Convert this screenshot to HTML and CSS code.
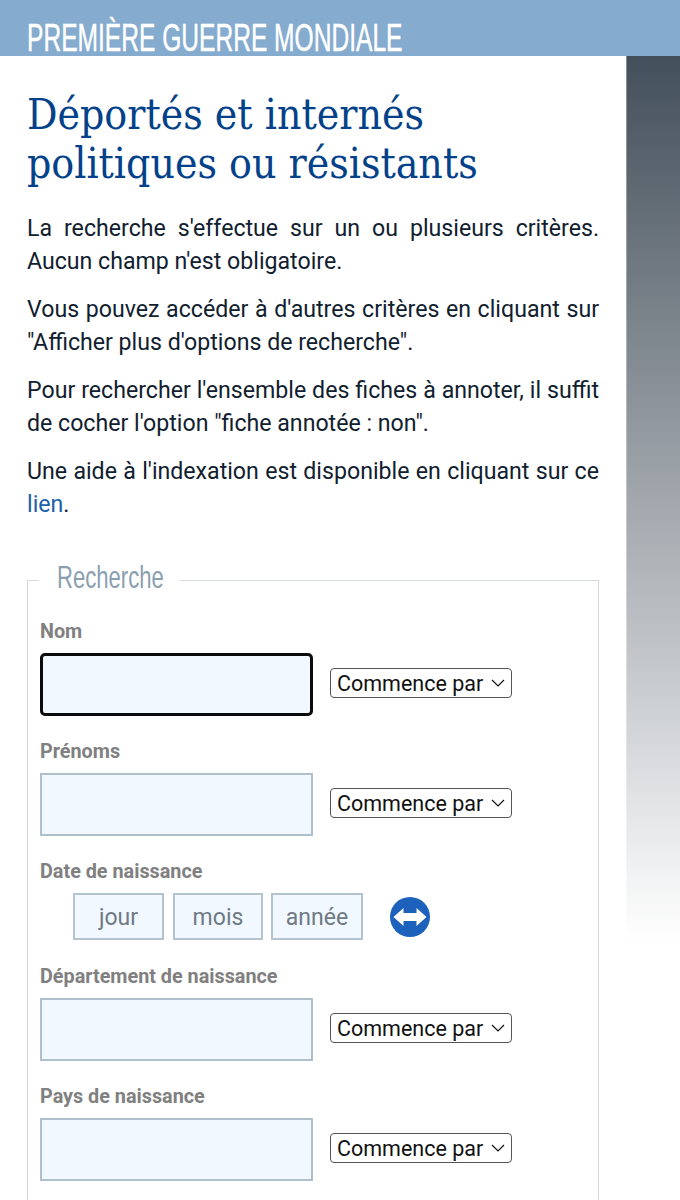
FILE: index.html
```html
<!DOCTYPE html>
<html lang="fr">
<head>
<meta charset="utf-8">
<title>Déportés et internés politiques ou résistants</title>
<link rel="stylesheet" href="styles.css">
</head>
<body>
<header class="top"><span class="top-title">PREMIÈRE GUERRE MONDIALE</span></header>
<div class="layout">
  <main class="main">
    <h1 class="title">Déportés et internés politiques ou résistants</h1>
    <p class="para">La recherche s'effectue sur un ou plusieurs critères. Aucun champ n'est obligatoire.</p>
    <p class="para">Vous pouvez accéder à d'autres critères en cliquant sur "Afficher plus d'options de recherche".</p>
    <p class="para">Pour rechercher l'ensemble des fiches à annoter, il suffit de cocher l'option "fiche annotée : non".</p>
    <p class="para">Une aide à l'indexation est disponible en cliquant sur ce <a class="link" href="#">lien</a>.</p>
    <fieldset class="box">
      <legend class="legend"><span class="legend-text">Recherche</span></legend>
      <div class="field">
        <label class="label">Nom</label>
        <div class="row">
          <input class="input is-focus" type="text">
          <span class="select-wrap"><select class="select"><option>Commence par</option></select><svg class="chev" width="14" height="8" viewBox="0 0 14 8"><path d="M1 1l6 6 6-6" fill="none" stroke="#111" stroke-width="1.2"/></svg></span>
        </div>
      </div>
      <div class="field">
        <label class="label">Prénoms</label>
        <div class="row">
          <input class="input" type="text">
          <span class="select-wrap"><select class="select"><option>Commence par</option></select><svg class="chev" width="14" height="8" viewBox="0 0 14 8"><path d="M1 1l6 6 6-6" fill="none" stroke="#111" stroke-width="1.2"/></svg></span>
        </div>
      </div>
      <div class="field field-date">
        <label class="label">Date de naissance</label>
        <div class="date-row">
          <input class="date d-j" type="text" placeholder="jour">
          <input class="date d-m" type="text" placeholder="mois">
          <input class="date d-a" type="text" placeholder="année">
          <svg class="swap" width="40" height="40" viewBox="0 0 40 40"><circle cx="20" cy="20" r="20" fill="#1c62bd"/><path d="M3.500 20L13.500 11V16H26.500V11L36.500 20 26.500 29V24H13.500V29z" fill="#fff"/></svg>
        </div>
      </div>
      <div class="field">
        <label class="label">Département de naissance</label>
        <div class="row">
          <input class="input" type="text">
          <span class="select-wrap"><select class="select"><option>Commence par</option></select><svg class="chev" width="14" height="8" viewBox="0 0 14 8"><path d="M1 1l6 6 6-6" fill="none" stroke="#111" stroke-width="1.2"/></svg></span>
        </div>
      </div>
      <div class="field">
        <label class="label">Pays de naissance</label>
        <div class="row">
          <input class="input" type="text">
          <span class="select-wrap"><select class="select"><option>Commence par</option></select><svg class="chev" width="14" height="8" viewBox="0 0 14 8"><path d="M1 1l6 6 6-6" fill="none" stroke="#111" stroke-width="1.2"/></svg></span>
        </div>
      </div>
    </fieldset>
  </main>
  <aside class="side"></aside>
</div>
</body>
</html>
```
FILE: styles.css
```css
* { box-sizing: border-box; }
html, body { margin: 0; padding: 0; height: 1200px; overflow: hidden; background: #fff; }
body { font-family: Roboto, "Liberation Sans", sans-serif; color: #10202f; }
.top { height: 56px; background: #85abce; padding: 0 27px; }
.top-title { display: block; width: 600px; padding-top: 19px; font: 400 39px/37px "Liberation Sans", sans-serif; color: #fff; white-space: nowrap; -webkit-text-stroke: .5px #fff; transform: scaleX(.63); transform-origin: left center; }
.layout { display: flex; align-items: flex-start; }
.main { width: 626px; flex: none; padding: 34px 27px 0 27px; }
.side { flex: 1; height: 885px; background: linear-gradient(90deg, rgba(255,255,255,.35) 1px, transparent 1px), linear-gradient(#434f5a, #fff); }
.title { margin: 0 0 24px; font: 400 42.3px/49px "DejaVu Serif Condensed", "DejaVu Serif", serif; color: #03428a; width: 490px; }
.para { margin: 0 0 15px; font-size: 23.15px; line-height: 33px; text-align: justify; color: #10202f; }
.link { color: #1a5fa8; text-decoration: none; }
.box { margin: 39px 0 0; padding: 21px 12px 100px; border: 1px solid #d4dadf; min-width: 0; }
.legend { width: 141px; margin-left: -1px; padding: 0 0 0 18px; height: 40px; }
.legend-text { display: block; width: 118px; font: 400 32px/40px "Liberation Sans", sans-serif; color: #8aa0b0; white-space: nowrap; transform: translateY(-3px) scaleX(.69); transform-origin: left center; }
.field { margin-bottom: 25px; }
.field-date { margin-bottom: 26px; }
.label { display: block; height: 22px; margin-bottom: 10px; font-size: 19.8px; line-height: 22px; font-weight: 700; color: #808080; }
.row { display: flex; align-items: flex-start; gap: 17px; }
.input { width: 273px; height: 63px; background: #f1f8ff; border: 2px solid #aebfcd; padding: 0 8px; }
.is-focus { border: 3px solid #0b0b0b; border-radius: 5px; outline: none; }
.select-wrap { position: relative; display: block; width: 182px; height: 30px; margin-top: 15px; }
.select { appearance: none; -webkit-appearance: none; width: 100%; height: 100%; padding: 1px 0 0 6px; background: #fff; border: 1px solid #555; border-radius: 4px; font: 400 21.5px/28px Roboto, sans-serif; color: #111; }
.chev { position: absolute; right: 7px; top: 11px; pointer-events: none; }
.date-row { display: flex; align-items: center; padding-left: 33px; }
.date { height: 47px; background: #f1f8ff; border: 2px solid #b3c3d0; text-align: center; font: 400 23px Roboto, sans-serif; color: #6c757d; padding: 1px 0 0; }
.date::placeholder { color: #6f7a84; opacity: 1; }
.d-j { width: 91px; margin-right: 9px; }
.d-m { width: 90px; margin-right: 8px; }
.d-a { width: 92px; margin-right: 27px; }
.swap { flex: none; }
```
